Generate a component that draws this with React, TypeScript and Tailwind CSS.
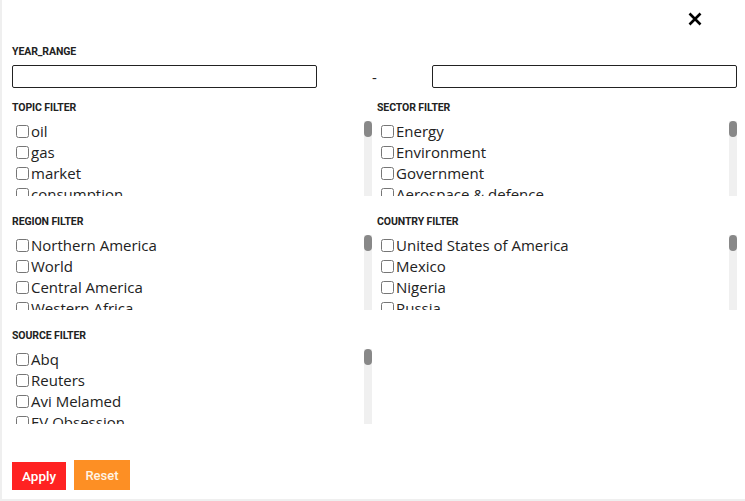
import React from "react";

const topics = ["oil","gas","market","consumption","gdp","battery","economy","production","export","coal","price","energy","demand","war","investment","growth","climate"];
const sectors = ["Energy","Environment","Government","Aerospace & defence","Manufacturing","Retail","Financial services","Support services","Information Technology","Healthcare","Food & agriculture","Automotive","Tourism & hospitality","Construction","Security","Transport","Water"];
const regions = ["Northern America","World","Central America","Western Africa","Western Asia","Eastern Europe","Central Africa","Northern Africa","Southern Africa","Southern Asia","Central Asia","Eastern Asia","South America","Southern Europe","Western Europe","Oceania","Northern Europe"];
const countries = ["United States of America","Mexico","Nigeria","Russia","Lebanon","Saudi Arabia","Angola","Egypt","South Africa","India","Ukraine","Azerbaijan","Canada","Iran","China","Colombia","Niger"];
const sources = ["Abq","Reuters","Avi Melamed","EV Obsession","EIA","OPEC","Bloomberg","CNBC","WSJ","Financial Times","Forbes","The Guardian","BBC","Oilprice.com","Platts","IEA","Statista"];

function Label({ children }: { children: React.ReactNode }) {
  return (
    <div className="h-[13px] pt-[1px] leading-[12px] text-[10.5px] font-bold text-[#222] font-['Roboto',sans-serif] tracking-[-0.1px]">
      {children}
    </div>
  );
}

function FilterList({ title, items }: { title: string; items: string[] }) {
  return (
    <div className="flex flex-col">
      <Label>{title}</Label>
      <div className="mt-[7px] h-[75px] flex">
        <div className="flex-1 overflow-hidden">
          {items.map((it) => (
            <label key={it} className="flex items-center h-[21px] text-[15px] leading-[21px] text-[#222] font-['Open_Sans',sans-serif] whitespace-nowrap">
              <input type="checkbox" className="ml-[4px] mr-[2px] w-[13px] h-[13px] shrink-0" />
              <span>{it}</span>
            </label>
          ))}
        </div>
        <div className="w-[8px] h-full bg-[#f0f0f0] shrink-0">
          <div className="w-[8px] h-[16px] bg-[#888] rounded-[4px]" />
        </div>
      </div>
    </div>
  );
}

export default function App() {
  return (
    <div className="w-[745px] h-[501px] bg-white border-l-2 border-b-2 border-[#efefef] pl-[10px] pr-[8px] flex flex-col">
      <div className="h-[45px] flex justify-end items-start pt-[12px] pr-[35px] shrink-0">
        <svg width="14" height="14" viewBox="0 0 14 14">
          <path d="M1.5 1.5 L12.5 12.5 M12.5 1.5 L1.5 12.5" stroke="#000" strokeWidth="2.6" />
        </svg>
      </div>
      <Label>YEAR_RANGE</Label>
      <div className="mt-[7px] flex items-center h-[23px]">
        <input type="text" className="w-[305px] h-[23px] border border-[#222] rounded-[2px] bg-white" />
        <div className="flex-1 text-center text-[15px] leading-[23px] text-[#222] font-['Open_Sans',sans-serif] pt-[1px]">-</div>
        <input type="text" className="w-[305px] h-[23px] border border-[#222] rounded-[2px] bg-white" />
      </div>
      <div className="mt-[13px] grid grid-cols-2 gap-x-[5px] gap-y-[19px]">
        <FilterList title="TOPIC FILTER" items={topics} />
        <FilterList title="SECTOR FILTER" items={sectors} />
        <FilterList title="REGION FILTER" items={regions} />
        <FilterList title="COUNTRY FILTER" items={countries} />
        <FilterList title="SOURCE FILTER" items={sources} />
      </div>
      <div className="mt-auto mb-[9px] flex items-end gap-[8px]">
        <button className="w-[54px] h-[28px] bg-[#ff2222] text-white text-[13.5px] font-medium font-['Roboto',sans-serif] flex items-center justify-center">
          Apply
        </button>
        <button className="w-[56px] h-[30px] pt-[2px] bg-[#fd8f24] text-[#fff4e6] text-[13px] font-medium font-['Roboto',sans-serif] flex items-center justify-center">
          Reset
        </button>
      </div>
    </div>
  );
}
